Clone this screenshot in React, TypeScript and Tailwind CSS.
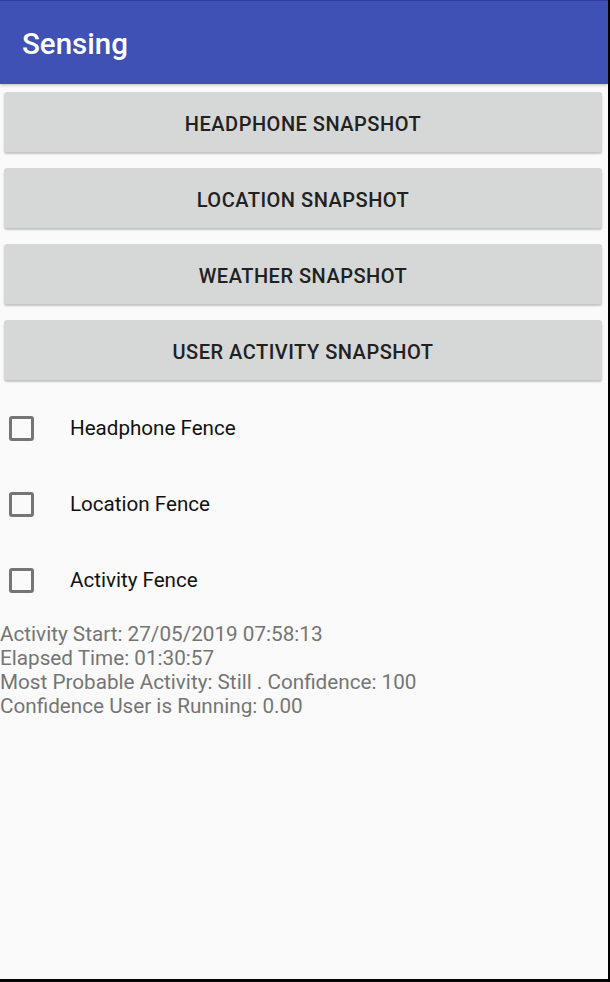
import React from 'react';

const buttons = ['Headphone Snapshot', 'Location Snapshot', 'Weather Snapshot', 'User Activity Snapshot'];
const fences = ['Headphone Fence', 'Location Fence', 'Activity Fence'];

export default function App() {
  return (
    <div
      className="w-[610px] h-[982px] bg-black flex flex-col"
      style={{ fontFamily: 'Roboto, "Noto Sans", sans-serif' }}
    >
      <div className="w-[608px] h-[979px] bg-[#fafafa] flex flex-col">
        {/* App bar */}
        <div className="h-[84px] bg-[#3f51b5] border-t border-[#303f9f] flex items-center pl-[22px] pt-[5px] shadow-[0_1px_3px_rgba(0,0,0,0.25)]">
          <span className="text-white text-[29.5px] font-medium leading-none">Sensing</span>
        </div>

        {/* Snapshot buttons */}
        <div className="flex flex-col gap-4 pt-2 pl-1 pr-[6px]">
          {buttons.map((b) => (
            <button
              key={b}
              className="h-[60px] w-full pt-[3px] bg-[#d6d7d7] rounded-[3px] shadow-[0_2px_2px_rgba(0,0,0,0.22)] text-[#212121] text-[20px] font-medium uppercase tracking-[0.5px]"
            >
              {b}
            </button>
          ))}
        </div>

        {/* Fences */}
        <div className="flex flex-col pt-[10px]">
          {fences.map((f) => (
            <div key={f} className="h-[76px] flex items-center">
              <div className="ml-[9px] w-[25px] h-[25px] border-[3px] border-[#757575] rounded-[3px]" />
              <span className="ml-[36px] text-[20.6px] text-[#111]">{f}</span>
            </div>
          ))}
        </div>

        {/* Activity info */}
        <div className="text-[20.7px] leading-[24px] text-[#757575] mt-[4px]">
          <div>Activity Start: 27/05/2019 07:58:13</div>
          <div>Elapsed Time: 01:30:57</div>
          <div>Most Probable Activity: Still . Confidence: 100</div>
          <div>Confidence User is Running: 0.00</div>
        </div>
      </div>
    </div>
  );
}
